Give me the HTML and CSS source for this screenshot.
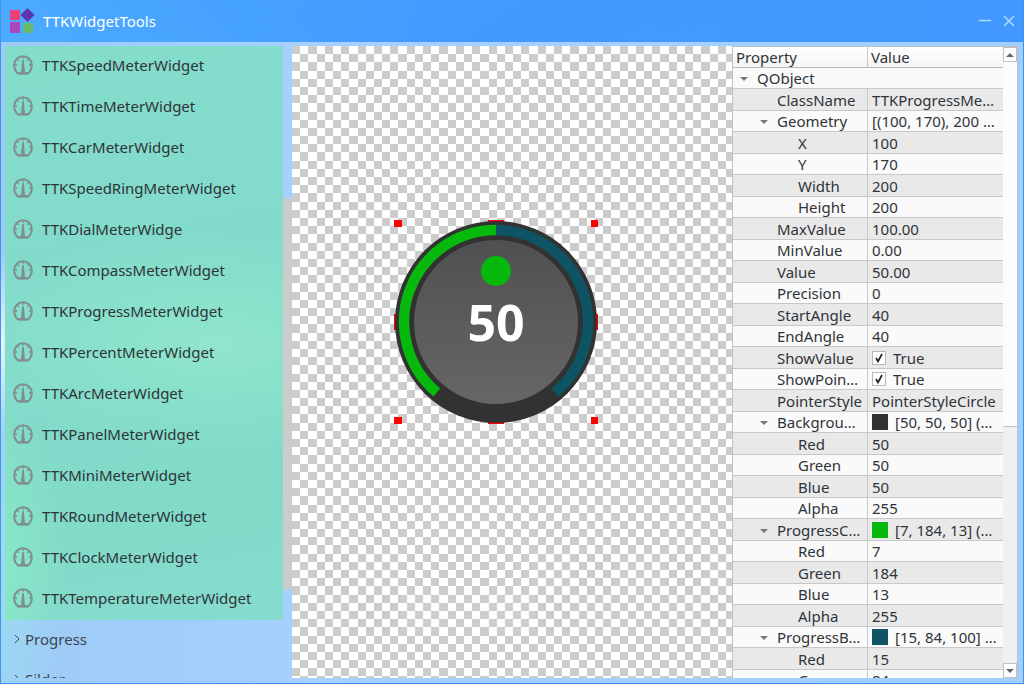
FILE: index.html
```
<!DOCTYPE html>
<html lang="en">
<head>
<meta charset="utf-8">
<title>TTKWidgetTools</title>
<link rel="stylesheet" href="styles.css">
</head>
<body>
<svg class="defs" aria-hidden="true">
  <symbol id="gauge" viewBox="0 0 20 20">
    <path d="M5 18.600C2.600 16.500 1.200 13.500 1.200 10A8.800 8.800 0 0 1 18.800 10C18.800 13.500 17.400 16.500 15 18.600Z" fill="none" stroke="currentColor" stroke-width="2"/>
    <path d="M10 2v2M4.500 4.500l1.300 1.300M15.500 4.500l-1.300 1.300M2 10h2M18 10h-2" stroke="currentColor" stroke-width="1.300"/>
    <path d="M9.200 5h1.600L12 18H8Z" fill="currentColor"/>
    <path d="M5 18.300h10" stroke="currentColor" stroke-width="2"/>
  </symbol>
</svg>
<div class="window">
  <header class="titlebar">
    <svg class="logo" viewBox="0 0 26 26" aria-hidden="true">
      <path fill="#ec407a" d="M0 2h10v10H0z"/>
      <path fill="#5e35b1" d="M17.500 0l7 7-7 7-7-7z"/>
      <path fill="#ab47bc" d="M0 14h10v11H0z"/>
      <path fill="#66bb6a" d="M13 15h10v10H13z"/>
    </svg>
    <h1 class="title">TTKWidgetTools</h1>
    <button class="winbtn" aria-label="Minimize"><svg viewBox="0 0 14 14"><path d="M1 6.500h12"/></svg></button>
    <button class="winbtn" aria-label="Close"><svg viewBox="0 0 14 14"><path d="M2 2l10 10M12 2L2 12"/></svg></button>
  </header>
  <main class="content">
    <nav class="sidebar">
      <div class="tree">
        <div class="meters">
          <button class="item"><svg><use href="#gauge"/></svg>TTKSpeedMeterWidget</button>
          <button class="item"><svg><use href="#gauge"/></svg>TTKTimeMeterWidget</button>
          <button class="item"><svg><use href="#gauge"/></svg>TTKCarMeterWidget</button>
          <button class="item"><svg><use href="#gauge"/></svg>TTKSpeedRingMeterWidget</button>
          <button class="item"><svg><use href="#gauge"/></svg>TTKDialMeterWidge</button>
          <button class="item"><svg><use href="#gauge"/></svg>TTKCompassMeterWidget</button>
          <button class="item"><svg><use href="#gauge"/></svg>TTKProgressMeterWidget</button>
          <button class="item"><svg><use href="#gauge"/></svg>TTKPercentMeterWidget</button>
          <button class="item"><svg><use href="#gauge"/></svg>TTKArcMeterWidget</button>
          <button class="item"><svg><use href="#gauge"/></svg>TTKPanelMeterWidget</button>
          <button class="item"><svg><use href="#gauge"/></svg>TTKMiniMeterWidget</button>
          <button class="item"><svg><use href="#gauge"/></svg>TTKRoundMeterWidget</button>
          <button class="item"><svg><use href="#gauge"/></svg>TTKClockMeterWidget</button>
          <button class="item"><svg><use href="#gauge"/></svg>TTKTemperatureMeterWidget</button>
        </div>
        <button class="group"><svg viewBox="0 0 6 10"><path d="M1 1l4 4-4 4"/></svg>Progress</button>
        <button class="group"><svg viewBox="0 0 6 10"><path d="M1 1l4 4-4 4"/></svg>Silder</button>
      </div>
      <div class="track"><div class="thumb"></div></div>
    </nav>
    <section class="canvas">
      <svg class="dial" viewBox="0 0 204 204" role="img" aria-label="Progress meter, 50">
        <defs>
          <linearGradient id="face" x1="0" y1="0" x2="0" y2="1"><stop offset="0" stop-color="#505050"/><stop offset="1" stop-color="#666"/></linearGradient>
        </defs>
        <path fill="#f00" d="M0 0h8v7H0zM94 0h16v7H94zM197 0h7v7h-7zM0 94h8v16H0zM196 94h8v16h-8zM0 197h8v7H0zM94 197h16v7H94zM197 197h7v7h-7z"/>
        <circle cx="102" cy="102" r="101" fill="#323232"/>
        <path d="M42.900 172.500A92 92 0 0 1 102 10" fill="none" stroke="#07b80d" stroke-width="10.500"/>
        <path d="M102 10A92 92 0 0 1 161.100 172.500" fill="none" stroke="#0f5464" stroke-width="10.500"/>
        <circle cx="102" cy="102" r="82" fill="url(#face)"/>
        <circle cx="102" cy="51" r="15" fill="#07b80d"/>
        <text class="reading" x="102" y="121" text-anchor="middle">50</text>
      </svg>
    </section>
    <section class="inspector">
      <div class="sheet">
        <table class="props">
          <colgroup><col class="name"><col></colgroup>
          <thead><tr><th>Property</th><th>Value</th></tr></thead>
          <tbody>
            <tr><td colspan="2" class="l0 open">QObject</td></tr>
            <tr><td class="l1">ClassName</td><td>TTKProgressMe…</td></tr>
            <tr><td class="l1 open">Geometry</td><td>[(100, 170), 200 …</td></tr>
            <tr><td class="l2">X</td><td>100</td></tr>
            <tr><td class="l2">Y</td><td>170</td></tr>
            <tr><td class="l2">Width</td><td>200</td></tr>
            <tr><td class="l2">Height</td><td>200</td></tr>
            <tr><td class="l1">MaxValue</td><td>100.00</td></tr>
            <tr><td class="l1">MinValue</td><td>0.00</td></tr>
            <tr><td class="l1">Value</td><td>50.00</td></tr>
            <tr><td class="l1">Precision</td><td>0</td></tr>
            <tr><td class="l1">StartAngle</td><td>40</td></tr>
            <tr><td class="l1">EndAngle</td><td>40</td></tr>
            <tr><td class="l1">ShowValue</td><td><label class="check"><input type="checkbox" checked>True</label></td></tr>
            <tr><td class="l1">ShowPoin…</td><td><label class="check"><input type="checkbox" checked>True</label></td></tr>
            <tr><td class="l1">PointerStyle</td><td>PointerStyleCircle</td></tr>
            <tr><td class="l1 open">Backgrou…</td><td><div class="color"><i class="swatch dark"></i>[50, 50, 50] (…</div></td></tr>
            <tr><td class="l2">Red</td><td>50</td></tr>
            <tr><td class="l2">Green</td><td>50</td></tr>
            <tr><td class="l2">Blue</td><td>50</td></tr>
            <tr><td class="l2">Alpha</td><td>255</td></tr>
            <tr><td class="l1 open">ProgressC…</td><td><div class="color"><i class="swatch green"></i>[7, 184, 13] (…</div></td></tr>
            <tr><td class="l2">Red</td><td>7</td></tr>
            <tr><td class="l2">Green</td><td>184</td></tr>
            <tr><td class="l2">Blue</td><td>13</td></tr>
            <tr><td class="l2">Alpha</td><td>255</td></tr>
            <tr><td class="l1 open">ProgressB…</td><td><div class="color"><i class="swatch teal"></i>[15, 84, 100] …</div></td></tr>
            <tr><td class="l2">Red</td><td>15</td></tr>
            <tr><td class="l2">Green</td><td>84</td></tr>
          </tbody>
        </table>
      </div>
      <div class="scroll">
        <button aria-label="Scroll up"><svg viewBox="0 0 8 4"><path d="M0 4l4-4 4 4z"/></svg></button>
        <div class="handle"></div>
        <div class="rest"></div>
        <button aria-label="Scroll down"><svg viewBox="0 0 8 4"><path d="M0 0l4 4 4-4z"/></svg></button>
      </div>
    </section>
  </main>
</div>
</body>
</html>
```

FILE: styles.css
```
* { box-sizing: border-box; }

body {
  margin: 0;
  font: 15px/20px "Noto Sans", "Open Sans", sans-serif;
  color: #2f3439;
}

button {
  padding: 0;
  border: 0;
  background: none;
  color: inherit;
  font: inherit;
}

.defs { display: none; }

.window {
  display: flex;
  flex-direction: column;
  height: 100vh;
  overflow: hidden;
  border: 1px solid #3f92f0;
  border-top: 0;
  background: linear-gradient(100deg, #49a7ff, #429cff 40%, #4096ff);
}

.titlebar {
  display: flex;
  align-items: center;
  flex: none;
  height: 42px;
  padding: 0 8px;
  gap: 10px;
  background:
    linear-gradient(145deg, transparent 48%, #3a8ef530 48%, transparent 70%),
    linear-gradient(20deg, #55b4ff50, transparent 30%);
}

.logo { width: 26px; height: 26px; margin-left: 1px; }

.title {
  flex: 1;
  margin: 0 0 0 -3px;
  color: #fff;
  font-size: 15px;
  font-weight: 400;
}

.winbtn svg {
  display: block;
  width: 14px;
  height: 14px;
  fill: none;
  stroke: #b5d8ff;
  stroke-width: 1.5;
}

.winbtn:last-child { margin-right: -1px; }

.content {
  display: flex;
  flex: 1;
  min-height: 0;
  padding: 4px 5px 5px 4px;
  background:
    radial-gradient(ellipse 16px 90px at 0 47%, #e8f8ff, transparent),
    radial-gradient(ellipse 60px 260px at 0 80%, #9be8ee90, transparent),
    linear-gradient(90deg, #9dcbf5, #a5d0ff 30%, #a0cfff);
}

.sidebar { display: flex; flex: none; width: 287px; }

.tree { flex: 1; overflow: hidden; }

.meters {
  background:
    radial-gradient(ellipse 60px 170px at 0 90%, #8cf0c4a0, transparent),
    radial-gradient(ellipse 260px 110px at 75% 52%, #93e9cbd0, transparent),
    linear-gradient(170deg, #84dccb, #82dacb 55%, #82dac8 80%, #86dccf);
}

.item {
  display: flex;
  align-items: center;
  gap: 9px;
  width: 100%;
  height: 41px;
  padding: 0 0 4px 8px;
}

.item svg { width: 20px; height: 20px; margin-top: 1px; color: #7f8f8f; }

.group {
  display: flex;
  align-items: center;
  gap: 5px;
  width: 100%;
  height: 40px;
  padding: 0 0 2px 9px;
  color: #3d4550;
}

.group svg {
  width: 6px;
  height: 10px;
  fill: none;
  stroke: #3d4550;
}

.track {
  display: grid;
  grid-template-rows: 152fr 392fr 88fr;
  width: 9px;
}

.thumb { grid-row: 2; border-radius: 4px; background: #ccc; }

.canvas {
  position: relative;
  flex: 1;
  background: #ccc url("data:image/svg+xml,%3Csvg xmlns='http://www.w3.org/2000/svg' width='131' height='131' viewBox='0 0 16 16' shape-rendering='crispEdges'%3E%3Cpath fill='%23fff' fill-rule='evenodd' d='M0 0h1v16h-1zM2 0h1v16h-1zM4 0h1v16h-1zM6 0h1v16h-1zM8 0h1v16h-1zM10 0h1v16h-1zM12 0h1v16h-1zM14 0h1v16h-1zM0 0h16v1h-16zM0 2h16v1h-16zM0 4h16v1h-16zM0 6h16v1h-16zM0 8h16v1h-16zM0 10h16v1h-16zM0 12h16v1h-16zM0 14h16v1h-16z'/%3E%3C/svg%3E");
}

.dial {
  position: absolute;
  left: 102px;
  top: 174px;
  width: 204px;
  height: 204px;
}

.reading { fill: #fff; font-size: 50px; font-weight: 700; }

.inspector {
  display: flex;
  flex: none;
  width: 286px;
  border-top: 1px solid #c0c0c0;
  border-left: 1px solid #c0c0c0;
  background: #fafafa;
}

.sheet { flex: 1; overflow: hidden; }

.props {
  width: 100%;
  table-layout: fixed;
  border-collapse: separate;
  border-spacing: 0;
}

.name { width: 50%; }

.props th {
  height: 21px;
  padding: 0 0 0 3px;
  border-bottom: 1px solid #b8b8b8;
  background: linear-gradient(#fff, #f4f4f4);
  font-weight: 400;
  line-height: 20px;
  text-align: left;
}

.props th:first-child,
.props td:first-child:not([colspan]) { border-right: 1px solid #c8c8c8; }

.props td {
  height: 21px;
  padding: 0 0 0 4px;
  border-bottom: 1px solid #c8c8c8;
  background: #fafafa;
  line-height: 20px;
  white-space: nowrap;
  overflow: hidden;
}

.props tbody tr:nth-child(even) td { height: 22px; background: #e9e9e9; }

.props td.l0 { padding-left: 24px; }
.props td.l1 { padding-left: 44px; }
.props td.l2 { padding-left: 65px; }

.open::before {
  content: "";
  display: inline-block;
  width: 0;
  margin: 0 9px 3px -17px;
  border: 4px solid transparent;
  border-top-color: #777;
  border-bottom: 0;
}

.check, .color { display: flex; align-items: center; }

.check { gap: 7px; }

.check input {
  width: 14px;
  height: 14px;
  margin: 0;
  appearance: none;
  border: 1px solid #b8b8b8;
  background: #fff url("data:image/svg+xml,%3Csvg xmlns='http://www.w3.org/2000/svg' viewBox='0 0 12 12'%3E%3Cpath d='M3 6l2 3.500L9 2' fill='none' stroke='%23222' stroke-width='1.700'/%3E%3C/svg%3E");
}

.color { gap: 7px; }

.swatch { width: 16px; height: 16px; }
.dark { background: #323232; }
.green { background: #07b80d; }
.teal { background: #0f5464; }

.scroll {
  display: flex;
  flex-direction: column;
  width: 15px;
  border-right: 1px solid #c0c0c0;
}

.scroll button {
  display: grid;
  place-items: center;
  height: 15px;
  border: 1px solid #c0c0c0;
  background: #fff;
}

.scroll svg { width: 8px; height: 4px; fill: #666; }

.handle { flex: 365; background: #fcfcfc; border-bottom: 1px solid #c0c0c0; }
.rest { flex: 236; background: #f0f0f0; }
```
